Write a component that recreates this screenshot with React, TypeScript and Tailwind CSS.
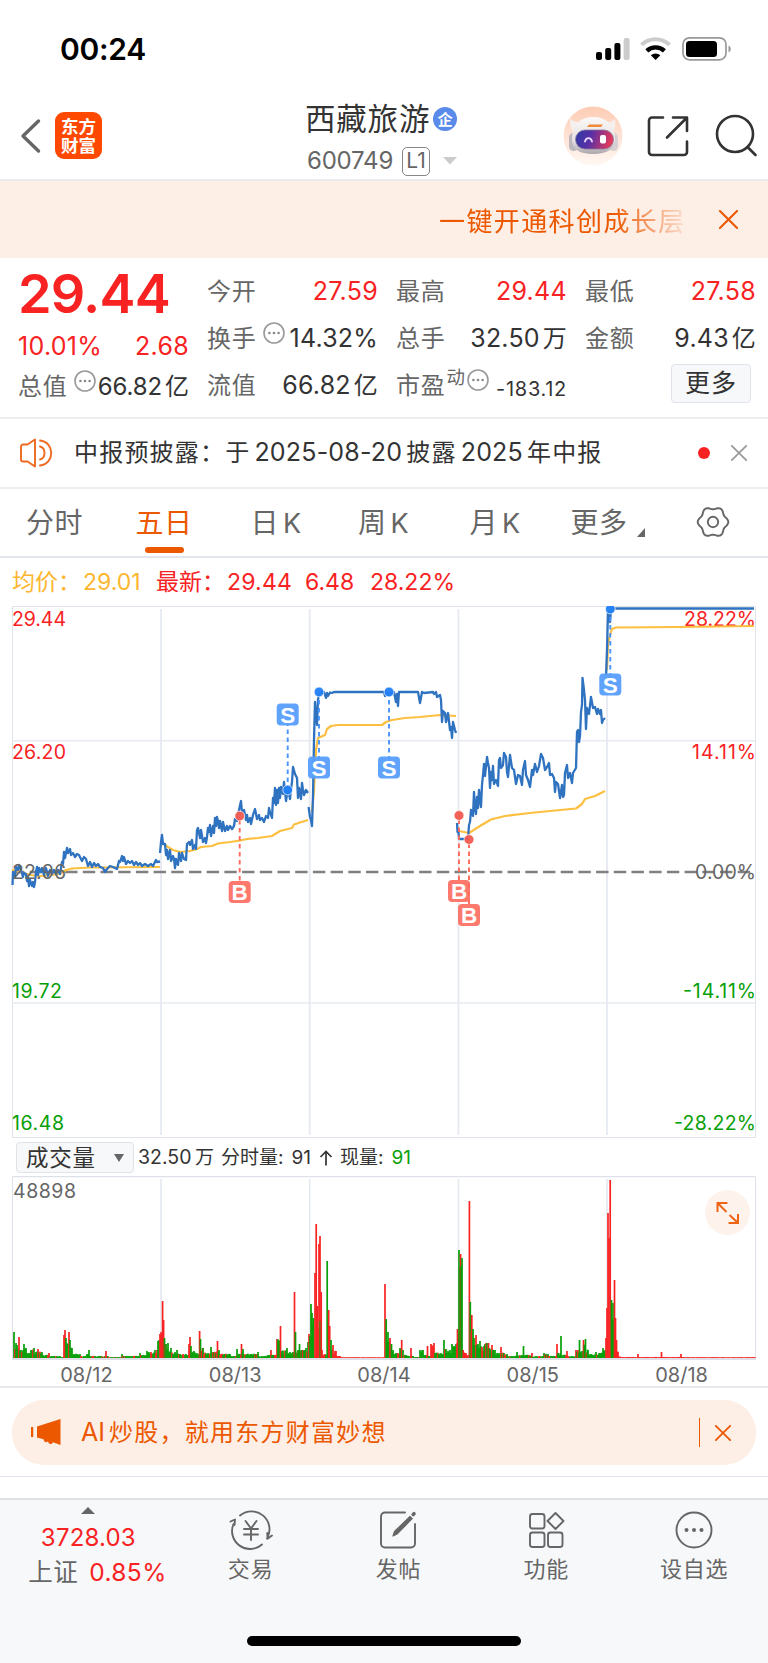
import type { ReactNode } from 'react'

type Point = [number, number]
type Bar = [number, number, string?]

const BLUE = '#2f73c0'
const YELLOW = '#fdbf3f'
const RED = '#f82222'
const GREEN = '#08a008'

const prices: Point[][] = [
  [[12.5, 885], [13, 872], [15, 876], [16, 867], [18, 870], [19, 865], [21, 870], [23, 877], [24, 873], [26, 874], [27, 881], [28, 877], [29, 886], [30, 880], [32, 886], [33, 882], [34, 887], [35, 882], [36, 872], [37, 867], [38, 875], [39, 868], [41, 872], [42, 868], [44, 875], [46, 868], [48, 876], [50, 870], [52, 874], [54, 870], [56, 874], [58, 870], [60, 874], [62, 862], [63, 864], [64, 852], [65, 858], [67, 848], [68, 853], [70, 849], [71, 855], [73, 853], [75, 857], [77, 854], [79, 855], [82, 861], [84, 857], [86, 859], [88, 866], [90, 862], [92, 867], [94, 863], [96, 866], [98, 864], [100, 867], [103, 868], [105, 872], [107, 869], [110, 866], [113, 867], [117, 869], [119, 861], [120, 862], [122, 856], [123, 861], [124, 857], [126, 864], [128, 861], [130, 863], [132, 861], [134, 865], [136, 862], [138, 865], [140, 863], [142, 866], [145, 864], [148, 866], [151, 864], [153, 866], [156, 860], [157, 862], [160, 861.5]],
  [[160, 853], [161, 842], [162, 835], [163, 844], [165, 844], [166, 855], [167, 850], [168, 859], [170, 850], [171, 861], [173, 856], [174, 859], [175, 868], [176, 859], [178, 865], [179, 853], [181, 861], [182, 853], [184, 859], [186, 860], [187, 844], [189, 842], [190, 845], [192, 840], [193, 849], [195, 845], [196, 849], [197, 830], [198, 828], [200, 838], [201, 830], [203, 842], [205, 838], [206, 843], [207, 837], [208, 828], [209, 832], [210, 825], [211, 836], [213, 826], [214, 833], [215, 818], [216, 826], [217, 817], [218, 821], [219, 828], [220, 821], [222, 831], [223, 822], [225, 831], [227, 826], [228, 830], [230, 826], [232, 829], [234, 826], [235, 819], [237, 821], [239, 810], [241, 801], [242, 813], [244, 810], [246, 820], [247, 815], [248, 822], [250, 818], [251, 824], [253, 815], [255, 809], [257, 819], [259, 815], [260, 820], [262, 818], [264, 822], [266, 816], [268, 818], [269, 808], [270, 812], [272, 818], [273, 798], [274, 803], [275, 788], [276, 805], [277, 790], [278, 803], [279, 788], [280, 798], [281, 787], [283, 794], [284, 782], [286, 801], [288, 788], [290, 799], [291, 789], [292, 782], [293, 767], [295, 774], [297, 778], [298, 798], [299, 788], [301, 799], [302, 783], [303, 790], [304, 795], [306, 790], [308, 793]],
  [[308.6, 807], [310, 817], [311, 820], [312, 826], [313, 796], [314, 740], [315, 702], [316, 715], [317, 725], [318, 700], [319, 693], [324, 692], [326, 698], [327, 693], [328, 696], [330, 692.5], [332, 693], [334, 692], [384, 692], [385, 696], [386, 692], [388, 695], [394, 692], [396, 702], [397, 694], [398, 706], [399, 692], [418, 692], [420, 703], [422, 692], [424, 693], [433, 692], [434, 694], [436, 692], [437, 697], [440, 695], [441, 700], [442, 722], [443, 711], [445, 713], [446, 722], [448, 713], [450, 730], [451, 727], [452, 738], [453, 722], [455, 730], [456, 733]],
  [[457, 823], [457.5, 832], [458.5, 832], [459, 839], [468, 839], [469, 825], [470, 822], [471, 810], [473, 816], [474, 792], [475, 808], [476, 814], [477, 797], [478, 808], [479, 790], [481, 807], [482, 785], [483, 775], [484, 764], [485, 776], [487, 757], [488, 763], [489, 768], [490, 788], [491, 772], [492, 780], [493, 766], [494, 784], [496, 780], [498, 786], [499, 760], [500, 758], [501, 768], [503, 765], [504, 753], [506, 757], [507, 772], [508, 777], [509, 766], [510, 755], [512, 768], [514, 770], [516, 784], [518, 775], [520, 776], [522, 785], [523, 770], [525, 761], [526, 775], [528, 780], [530, 787], [532, 770], [533, 775], [535, 764], [537, 772], [539, 766], [541, 754], [543, 758], [545, 770], [547, 767], [549, 763], [550, 775], [552, 774], [554, 778], [555, 792], [556, 782], [558, 784], [560, 798], [562, 785], [563, 797], [564, 795], [565, 773], [567, 765], [568, 778], [570, 773], [572, 783], [573, 773], [576, 768], [577, 732], [578, 730], [579, 742], [580, 736], [581, 712], [582, 705], [582.5, 678], [584, 690], [585, 700], [586, 729], [587, 708], [589, 714], [591, 697], [593, 708], [595, 707], [597, 714], [598, 709], [600, 714], [601, 710], [602, 723], [603, 720], [605, 718]],
  [[606, 676], [607, 650], [608, 612], [609, 613], [610, 622], [611, 610], [612, 608.5], [754, 608.5]],
]

const averages: Point[][] = [
  [[12, 870], [20, 872], [30, 875], [40, 876], [50, 875], [60, 874], [66, 870], [72, 868.5], [90, 867.5], [160, 867]],
  [[161, 841], [165, 845], [168, 847], [173, 850], [180, 852], [190, 851], [197, 849], [201, 847], [212, 846], [218, 843.5], [230, 842], [240, 840.5], [247, 839], [258, 838], [272, 836], [280, 831], [292, 828], [294, 824.5], [300, 822.5], [308, 820]],
  [[312, 812], [314, 790], [316, 750], [318, 738], [325, 735], [327, 729], [331, 726], [338, 725], [382, 725], [386, 722], [392, 720], [405, 718], [420, 717], [440, 715], [456, 716]],
  [[459, 831], [469, 833], [480, 826], [491, 819.5], [505, 816], [530, 813], [550, 811], [576, 808.5], [582, 804], [585, 799], [595, 796], [605, 791]],
  [[607, 670], [608, 645], [610, 635], [612, 629], [616, 627.5], [680, 627], [754, 626]],
]

// x, height, colour of each minute bar; the gaps are filled with small ones
const volumes: Bar[] = [
  [14, 26], [16, 15], [17, 13], [19, 21, 'r'], [21, 8], [24, 14], [26, 10], [29, 5], [31, 8], [34, 10], [36, 6], [38, 9, 'r'], [42, 6], [46, 3], [49, 5, 'r'], [52, 2], [60, 2], [63, 1], [64, 23, 'r'], [65, 28, 'r'], [66, 20], [68, 14], [69, 26, 'r'], [70, 18], [72, 10], [74, 4], [80, 4], [84, 2], [87, 4], [89, 8], [91, 2], [105, 2], [106, 7, 'r'], [108, 2], [118, 1], [122, 4], [126, 2], [138, 2], [140, 5], [143, 3], [147, 7], [151, 6, 'r'], [155, 8], [158, 17], [160, 24, 'r'], [162.6, 57, 'r'], [163.6, 38, 'r'], [164.5, 20], [166, 14], [168, 15], [171, 10], [175, 6], [177, 8], [180, 4], [186, 4], [189, 14, 'r'], [190, 21, 'r'], [191, 12], [194, 7], [197, 5], [199.6, 27, 'r'], [200.5, 19], [203, 10], [208, 5], [211, 11], [214, 6], [217.5, 17, 'r'], [219, 8], [224, 4], [230, 4], [235, 2], [237, 9], [240, 4], [241.5, 14, 'r'], [243, 9], [247, 4], [256, 4], [258, 6], [262, 2], [268, 3], [271, 8, 'r'], [274, 3], [277, 19, 'r'], [278.5, 18], [280.5, 32, 'r'], [282, 7], [287, 10], [290, 6], [293, 6], [294.5, 66, 'r'], [295.5, 26], [298, 8], [299.5, 14], [302, 8], [306, 10], [308, 16], [309, 24, 'r'], [311, 54], [312, 45], [313.6, 40], [315, 85, 'r'], [316.2, 134, 'r'], [317.2, 52, 'r'], [318, 30, 'r'], [319, 114, 'r'], [320, 122, 'r'], [320.3, 37], [321.2, 66, 'r'], [322, 8, 'r'], [325, 4, 'r'], [327.2, 97], [328.7, 48, 'r'], [329.7, 32, 'r'], [331, 18], [333, 13, 'r'], [336, 7, 'r'], [340, 2, 'r'], [343, 0.7, 'r'], [384, 0.7, 'r'], [385, 74, 'r'], [386.2, 39], [388, 26], [390, 20, 'r'], [391.5, 14], [393, 8], [396, 5], [400, 10], [401.7, 18, 'r'], [403, 8], [406, 3], [409, 2], [411, 10, 'r'], [413, 2], [418, 1], [420, 8], [423, 8], [425, 3], [427.5, 12, 'r'], [429, 2], [431, 14, 'r'], [434, 15, 'r'], [436, 5], [441, 5], [444, 18], [446, 9], [450, 8], [452, 14], [456, 14], [457.5, 29, 'r'], [459, 108], [460, 90], [460.6, 104, 'r'], [461.2, 92], [462, 100], [463.2, 8, 'r'], [466, 5, 'r'], [468, 3, 'r'], [469.4, 157, 'r'], [470.3, 56], [471.8, 43, 'r'], [473, 29], [474, 20], [476, 23, 'r'], [478, 14], [480, 17], [484, 12], [485, 14], [488.5, 15, 'r'], [490, 9], [492, 13, 'r'], [495, 8], [497, 5], [501, 11, 'r'], [504, 5], [507, 4], [512, 2], [517, 6], [522, 3], [523.5, 12], [526, 3], [532, 5, 'r'], [536, 2], [544, 5], [548, 4], [552, 2], [557, 14, 'r'], [558.5, 5], [561, 22], [563, 3], [567, 7, 'r'], [572, 2], [576, 8, 'r'], [579.5, 18], [582, 7], [583.5, 18, 'r'], [585.5, 19], [588, 8], [591, 4], [596, 6], [600, 5], [603, 10], [606, 20, 'r'], [607, 50, 'r'], [608, 145, 'r'], [609, 120, 'r'], [610.2, 178, 'r'], [611.5, 58], [613, 55], [614.5, 78, 'r'], [615.5, 40, 'r'], [616.5, 18, 'r'], [618, 6, 'r'], [620, 1.5, 'r'], [630, 1, 'r'], [638, 4, 'r'], [640, 1, 'r'], [660, 1, 'r'], [661.5, 6, 'r'], [663, 1, 'r'], [680, 1, 'r'], [681, 4, 'r'], [683, 1, 'r'], [755, 0.8, 'r'],
]

function fillBars(data: Bar[]): Bar[] {
  let seed = 7
  const rand = () => {
    seed = (seed * 16807) % 2147483647
    return seed / 2147483647
  }
  const out: Bar[] = []
  data.forEach((bar, i) => {
    out.push(bar)
    const next = data[i + 1]
    if (!next) return
    for (let x = bar[0] + 1; x < next[0] - 0.4; x += 1) {
      const h = Math.min(bar[1], next[1]) * (0.6 + rand() * 0.5)
      const red = rand() > 0.72 || (bar[2] === 'r' && next[2] === 'r')
      out.push([x, h, red ? 'r' : undefined])
    }
  })
  return out
}

const bars = fillBars(volumes)

const markers = [
  { type: 'S', x: 287.7, dot: 790, y: 714.5 },
  { type: 'S', x: 319, dot: 692, y: 767.5 },
  { type: 'S', x: 389, dot: 692, y: 767.5 },
  { type: 'S', x: 610.3, dot: 609, y: 684.5 },
  { type: 'B', x: 239.7, dot: 816, y: 892 },
  { type: 'B', x: 459, dot: 815.5, y: 891 },
  { type: 'B', x: 469, dot: 839.5, y: 915 },
]

const toPoints = (list: Point[]) => list.map((p) => p.join(',')).join(' ')

// six soft lobes around a circle
const gear = Array.from({ length: 90 }, (_, i) => {
  const a = (i / 90) * Math.PI * 2
  const r = 14 + 1.3 * Math.cos(6 * a)
  return `${(17 + r * Math.cos(a)).toFixed(2)},${(16 + r * Math.sin(a)).toFixed(2)}`
}).join(' ')

function MoreDots({ className }: { className?: string }) {
  return (
    <svg className={`size-[22px] shrink-0 ${className ?? ''}`} viewBox="0 0 22 22" fill="none">
      <circle cx="11" cy="11" r="10" stroke="#999" strokeWidth="1.6" />
      <circle cx="6.4" cy="11" r="1.3" fill="#888" />
      <circle cx="11" cy="11" r="1.3" fill="#888" />
      <circle cx="15.6" cy="11" r="1.3" fill="#888" />
    </svg>
  )
}

function Cross({ className }: { className?: string }) {
  return (
    <svg className={className} viewBox="0 0 20 20" fill="none" stroke="currentColor" strokeWidth="2.2" strokeLinecap="round">
      <path d="M1 1 19 19M19 1 1 19" />
    </svg>
  )
}

function StatusBar() {
  return (
    <div className="flex h-[90px] items-start justify-between pr-[36px] pl-[60px]">
      <span className="mt-[29px] text-[30px] leading-10 font-semibold tracking-[-0.3px] text-black">00:24</span>
      <div className="mt-[36px] flex items-center">
        <svg width="36" height="26" viewBox="0 0 36 26">
          <rect x="0" y="16" width="6" height="8" rx="2" />
          <rect x="9.2" y="12" width="6" height="12" rx="2" />
          <rect x="18.400" y="7" width="6" height="17" rx="2" />
          <rect x="27.600" y="2" width="6" height="22" rx="2" fill="#ccc" />
        </svg>
        <svg className="ml-[7px]" width="34" height="26" viewBox="0 0 34 26" fill="none">
          <path d="M2.5 8.8a20.5 20.5 0 0 1 28 0" stroke="#ccc" strokeWidth="4.2" />
          <path d="M7.8 14.8a13 13 0 0 1 17.6 0" stroke="#000" strokeWidth="4.4" />
          <path d="M16.6 24l-4.8-4.8a7.4 7.4 0 0 1 9.6 0z" fill="#000" />
        </svg>
        <svg className="ml-[9px]" width="50" height="26" viewBox="0 0 50 26">
          <rect x="1" y="1.8" width="43" height="22" rx="6.5" fill="none" stroke="#999" strokeWidth="1.7" />
          <rect x="4" y="5" width="31" height="16" rx="3.5" />
          <path d="M46.5 9.5v7c3-1.500 3-5.500 0-7z" fill="#999" />
        </svg>
      </div>
    </div>
  )
}

function Robot() {
  return (
    <svg width="60" height="60" viewBox="0 0 60 60">
      <defs>
        <linearGradient id="halo" x1="0" y1="0" x2="0" y2="1">
          <stop offset="0" stopColor="#fdccb4" />
          <stop offset="1" stopColor="#fff8f4" />
        </linearGradient>
        <linearGradient id="visor" x1="0" y1="0" x2="1" y2="0.15">
          <stop offset="0" stopColor="#2c3ba4" />
          <stop offset="0.45" stopColor="#5b2fa6" />
          <stop offset="1" stopColor="#e23a5c" />
        </linearGradient>
        <linearGradient id="shell" x1="0" y1="0" x2="0" y2="1">
          <stop offset="0" stopColor="#fbf8f7" />
          <stop offset="0.65" stopColor="#e6e1e3" />
          <stop offset="1" stopColor="#a9a5ab" />
        </linearGradient>
      </defs>
      <circle cx="30" cy="30" r="29.500" fill="url(#halo)" />
      <path d="M7 12c0 8 1 12 5 16l9-12c-6 1-11 0-14-4zM52 13c1 8 0 11-4 15l-8-12c5 1 9 0 12-3z" fill="#f5efed" />
      <rect x="6" y="27" width="9" height="18" rx="4.500" fill="#bdb8be" />
      <rect x="46" y="27" width="9" height="18" rx="4.500" fill="#d6d0d3" />
      <path d="M9 33c0-14 8-22 21-22s22 8 22 22c0 10-8 15-22 15S9 43 9 33z" fill="url(#shell)" />
      <rect x="12.500" y="24" width="38" height="19" rx="9.500" fill="url(#visor)" stroke="#8d7a9a" strokeWidth="0.800" />
      <path d="M22 35.500c1-4.500 6-4.500 7 0" fill="none" stroke="#e9d9ff" strokeWidth="1.800" strokeLinecap="round" />
      <rect x="37" y="29" width="6" height="8.500" rx="2" fill="#fff" />
      <path d="M24 21l2-2.500h14l-2 2.500z" fill="#ee8a3c" />
    </svg>
  )
}

function Header() {
  return (
    <header className="flex h-[91px] items-start border-b-2 border-[#ebecef] pl-[20px]">
      <svg className="mt-[28px]" width="22" height="36" viewBox="0 0 22 36" fill="none" stroke="#666" strokeWidth="3.4" strokeLinecap="round" strokeLinejoin="round">
        <path d="M18.500 3 3 18l15.500 15" />
      </svg>
      <div className="mt-[22px] ml-[13px] flex h-[47px] w-[47px] flex-col items-center justify-center rounded-[9px] bg-[#ff4800] text-[17.500px] leading-[19px] font-bold text-white">
        <span>东方</span>
        <span>财富</span>
      </div>
      <div className="ml-[203px] flex w-[258px] flex-col">
        <div className="flex h-[58px] items-center">
          <span className="text-[30.500px] tracking-[0.800px] text-[#333]">西藏旅游</span>
          <span className="ml-[3px] flex size-[24px] items-center justify-center rounded-full bg-[#5a8bea] text-[15px] leading-none font-bold text-white">企</span>
        </div>
        <div className="-mt-[2px] flex h-[30px] items-center text-[#666]">
          <span className="ml-[2px] text-[24px] tracking-[-0.2px]">600749</span>
          <span className="ml-[9px] flex h-[29px] w-[28px] items-center justify-center rounded-[5px] border border-[#888] text-[21px]">L1</span>
          <svg className="ml-[13px]" width="14" height="8" viewBox="0 0 14 8">
            <path d="M0 0h14L7 7.500z" fill="#ccc" />
          </svg>
        </div>
      </div>
      <div className="mt-[16px]">
        <Robot />
      </div>
      <svg className="mt-[25px] ml-[24px]" width="42" height="42" viewBox="0 0 42 42" fill="none" stroke="#333" strokeWidth="2.6" strokeLinecap="round" strokeLinejoin="round">
        <path d="M16 2.500H5a3 3 0 0 0-3 3V37a3 3 0 0 0 3 3h32a3 3 0 0 0 3-3V26.500" />
        <path d="M26 2.500h14V16M39.500 3 20 22.500" />
      </svg>
      <svg className="mt-[24px] ml-[26px]" width="43" height="43" viewBox="0 0 43 43" fill="none" stroke="#333" strokeWidth="2.6" strokeLinecap="round">
        <circle cx="20" cy="20" r="18" />
        <path d="m32.500 33 8 8" />
      </svg>
    </header>
  )
}

function Banner() {
  return (
    <div className="flex h-[77px] items-center justify-end bg-[#fdeee6] pr-[30px] text-[#ec5800]">
      <span className="mt-[4px] w-[249px] overflow-hidden text-[26px] leading-[40px] tracking-[1.400px] whitespace-nowrap [mask-image:linear-gradient(to_right,black_70%,transparent_102%)]">
        一键开通科创成长层
      </span>
      <Cross className="ml-[31px] size-[19px]" />
    </div>
  )
}

function Cell({ label, children, red }: { label: ReactNode; children?: ReactNode; red?: boolean }) {
  return (
    <div className="flex h-[47px] items-center justify-between whitespace-nowrap">
      <span className="flex items-center text-[24px] tracking-[0.8px] text-[#666]">{label}</span>
      <span className={red ? '-mr-px text-[25px] tracking-[0.3px] text-[#f82222]' : '-mr-px text-[25px] tracking-[0.2px] text-[#333]'}>{children}</span>
    </div>
  )
}

function Unit({ children }: { children: ReactNode }) {
  return <span className="ml-[3px] text-[24px]">{children}</span>
}

function Quote() {
  return (
    <section className="grid h-[161px] grid-cols-4 gap-x-[19px] border-b-2 border-[#eeeeef] pt-[10px] pr-[13px] pl-[18px]">
      <div className="text-[#f82222]">
        <div className="flex h-[55px] items-center pb-[4px] text-[54px] font-semibold tracking-[-0.8px]">29.44</div>
        <div className="-mr-px flex h-[44px] items-center justify-between pt-[3px] text-[25px] tracking-[0.3px]">
          <span>10.01%</span>
          <span>2.68</span>
        </div>
        <div className="-mr-px flex h-[39px] items-center whitespace-nowrap text-[#333]">
          <span className="text-[24px] tracking-[0.8px] text-[#666]">总值</span>
          <MoreDots className="-mt-[12px] ml-[6px]" />
          <span className="ml-auto text-[24px] tracking-[-0.1px]">66.82<Unit>亿</Unit></span>
        </div>
      </div>
      <div>
        <Cell label="今开" red>27.59</Cell>
        <Cell label={<>换手<MoreDots className="-mt-[12px] ml-[6px]" /></>}>14.32%</Cell>
        <Cell label="流值">66.82<Unit>亿</Unit></Cell>
      </div>
      <div>
        <Cell label="最高" red>29.44</Cell>
        <Cell label="总手">32.50<Unit>万</Unit></Cell>
        <Cell
          label={
            <>
              市盈
              <span className="-mt-[16px] ml-px text-[18.500px]">动</span>
              <MoreDots className="-mt-[12px] ml-px" />
            </>
          }
        >
          <span className="relative top-[2px] text-[20px] tracking-[0.7px]">-183.12</span>
        </Cell>
      </div>
      <div>
        <Cell label="最低" red>27.58</Cell>
        <Cell label="金额">9.43<Unit>亿</Unit></Cell>
        <button className="mt-[2px] mr-[4px] ml-auto flex h-[39px] w-[80px] items-center justify-center rounded-[4px] border border-[#dfe2e8] bg-[#f7f8fa] text-[25px] tracking-[1px] text-[#333]">
          更多
        </button>
      </div>
    </section>
  )
}

function Notice() {
  return (
    <div className="flex h-[70px] items-center border-b-2 border-[#eeeeef] pr-[21px] pl-[20px]">
      <svg width="33" height="30" viewBox="0 0 33 30" fill="none" stroke="#ee6a20" strokeWidth="1.9" strokeLinejoin="round" strokeLinecap="round">
        <path d="M15 1.500 7.500 6.500H3a2 2 0 0 0-2 2v13a2 2 0 0 0 2 2h4.500L15 28.500z" />
        <path d="M20 8.500c6 1.500 6 11.500 0 13M20 2.500c15 1.500 15 23.500 0 25" />
      </svg>
      <div className="ml-[21px] flex items-center text-[24px] tracking-[1.200px] whitespace-nowrap text-[#333]">
        <span>中报预披露：于</span>
        <span className="ml-[4px] text-[25px] tracking-[0.2px]">2025-08-20</span>
        <span className="ml-[4px]">披露</span>
        <span className="ml-[4px] text-[25px] tracking-[0.2px]">2025</span>
        <span className="ml-[4px]">年中报</span>
      </div>
      <span className="ml-auto size-[12px] rounded-full bg-[#f82222]" />
      <Cross className="ml-[21px] size-[16px] text-[#999]" />
    </div>
  )
}

function Tabs() {
  return (
    <nav className="flex h-[69px] items-center border-b-2 border-[#e3e5ee] pt-px text-[28px] tracking-[0.500px] text-[#666]">
      <span className="w-[109px] text-center">分时</span>
      <span className="relative w-[110px] text-center text-[#ec5800]">
        五日
        <i className="absolute -bottom-[9px] left-[36px] h-[6px] w-[39px] rounded-full bg-[#ec5800]" />
      </span>
      <span className="w-[114px] text-center">日<span className="ml-[4px] text-[27px]">K</span></span>
      <span className="w-[101px] text-center">周<span className="ml-[4px] text-[27px]">K</span></span>
      <span className="w-[122px] text-center">月<span className="ml-[4px] text-[27px]">K</span></span>
      <span className="flex w-[103px] items-center justify-center">
        更多
        <svg className="mt-[19px] ml-[9px]" width="8" height="9" viewBox="0 0 8 9">
          <path d="M8 0v9H0z" fill="#666" />
        </svg>
      </span>
      <span className="flex w-[108px] justify-center pb-[2px]">
        <svg width="34" height="32" viewBox="0 0 34 32" fill="none" stroke="#666" strokeWidth="1.900" strokeLinejoin="round">
          <polygon points={gear} />
          <circle cx="17" cy="16" r="5.200" />
        </svg>
      </span>
    </nav>
  )
}

function Label({ x, y, w, fill, end, children }: { x: number; y: number; w: number; fill: string; end?: boolean; children: string }) {
  return (
    <text x={x} y={y} fontSize="19.500" fill={fill} textAnchor={end ? 'end' : 'start'} textLength={w}>
      {children}
    </text>
  )
}

function PriceChart() {
  return (
    <svg className="block" width="768" height="532" viewBox="0 606 768 532">
      <path d="M12.500 1137.500V606.500H755.500V1137.500Z" fill="none" stroke="#dfe3ea" />
      <path d="M12 740.700H755M12 1003H755" stroke="#e8ebf1" strokeWidth="1.500" />
      <path d="M161 609V1135M309.700 609V1135M458.500 609V1135M607 609V1135" stroke="#e6e9f1" strokeWidth="1.800" />
      <path d="M12 872H755" stroke="#808080" strokeWidth="2.300" strokeDasharray="12.400 5.300" />
      <Label x={12} y={626} w={54} fill={RED}>29.44</Label>
      <Label x={12} y={758.500} w={54} fill={RED}>26.20</Label>
      <Label x={12} y={998} w={50} fill={GREEN}>19.72</Label>
      <Label x={12} y={1130} w={52} fill={GREEN}>16.48</Label>
      <Label x={756} y={626} w={72} fill={RED} end>28.22%</Label>
      <Label x={756} y={758.500} w={64} fill={RED} end>14.11%</Label>
      <Label x={756} y={878.500} w={61} fill="#666" end>0.00%</Label>
      <Label x={756} y={998} w={73} fill={GREEN} end>-14.11%</Label>
      <Label x={756} y={1130} w={82} fill={GREEN} end>-28.22%</Label>
      {averages.map((line, i) => (
        <polyline key={i} points={toPoints(line)} fill="none" stroke={YELLOW} strokeWidth="2.200" strokeLinejoin="round" />
      ))}
      {prices.map((line, i) => (
        <polyline key={i} points={toPoints(line)} fill="none" stroke={BLUE} strokeWidth="2.300" strokeLinejoin="round" />
      ))}
      <Label x={12} y={878.500} w={54} fill="#666">22.96</Label>
      {markers.map((m) => {
        const buy = m.type === 'B'
        const color = buy ? '#fd6a5b' : '#4a94fc'
        return (
          <g key={`${m.x}-${m.y}`}>
            <path d={`M${m.x} ${m.dot + (buy ? 4 : 0)}V${m.y}`} stroke={color} strokeWidth="1.900" strokeDasharray="4.500 3.500" />
            <circle cx={m.x} cy={m.dot} r="4.900" fill={buy ? '#f25a50' : '#2180f7'} fillOpacity="0.95" stroke="#fff" strokeWidth="0.700" />
            <rect x={m.x - 11} y={m.y - 11} width="22" height="22" rx="4" fill={buy ? '#fd7468' : '#5a9ffd'} fillOpacity="0.96" />
            <text x={m.x} y={m.y + 8} textAnchor="middle" fontSize="22.500" fontWeight="700" fill="#fff" fontFamily="Liberation Sans">
              {m.type}
            </text>
          </g>
        )
      })}
    </svg>
  )
}

function VolumeToolbar() {
  return (
    <div className="flex h-[38px] items-center pl-[16px] whitespace-nowrap text-[#333]">
      <div className="flex h-[31px] w-[118px] items-center rounded-[4px] border border-[#dfe2e8] bg-[#f7f8fa] pt-px pl-[9px] text-[22.500px] tracking-[0.800px]">
        成交量
        <svg className="ml-[18px]" width="10" height="8" viewBox="0 0 10 8">
          <path d="M0 0h10L5 8z" fill="#666" />
        </svg>
      </div>
      <div className="flex items-center pt-[2px] text-[19px]">
        <span className="ml-[4px] w-[54px] text-[19.500px]">32.50</span>
        <span className="ml-[3px]">万</span>
        <span className="ml-[7px]">分时量:</span>
        <span className="ml-[8px]">91</span>
        <svg className="ml-[8px]" width="14" height="16" viewBox="0 0 14 16" fill="none" stroke="#333" strokeWidth="1.700">
          <path d="M7 15.500V1.500M1.500 7 7 1.500 12.500 7" />
        </svg>
        <span className="ml-[7px]">现量:</span>
        <span className="ml-[8px] text-[#08a008]">91</span>
      </div>
    </div>
  )
}

function VolumeChart() {
  return (
    <div className="relative">
      <svg className="block" width="768" height="184" viewBox="0 1176 768 184">
        <path d="M12 1176.200H756" stroke="#dfe1ea" strokeWidth="2" />
        <path d="M12.500 1176V1360M755.500 1176V1360" stroke="#dfe1ea" />
        <path d="M161 1179V1357M309.700 1179V1357M458.500 1179V1357M607 1179V1357" stroke="#e4e9f1" strokeWidth="1.600" />
        {bars.map(([x, h, c], i) => (
          <rect key={i} x={x - 0.85} y={1358 - h} width="1.700" height={h} fill={c ? RED : GREEN} />
        ))}
        <path d="M12 1359H756" stroke="#dfdfe8" strokeWidth="1.800" />
        <Label x={13} y={1198} w={63} fill="#666">48898</Label>
      </svg>
      <button className="absolute top-[14px] right-[18px] flex size-[45px] items-center justify-center rounded-full bg-[#fdf2ec]">
        <svg width="24" height="24" viewBox="0 0 24 24" fill="none" stroke="#ee6518" strokeWidth="2">
          <path d="M1.500 11V2h10M2 2.500l8.500 8.500M22 13v9H12.500M21.500 21.500 13.500 14" />
        </svg>
      </button>
    </div>
  )
}

function Promo() {
  return (
    <div className="mx-[12px] mt-[12px] flex h-[65px] items-center rounded-[32px] bg-[#fdeee6] pr-[25px] pl-[19px] text-[#ec5800]">
      <svg width="30" height="27" viewBox="0 0 30 27" fill="currentColor">
        <path d="M0 8h2.200v10H0zM6 7.500 29.500 0v26L22 23.300c-1 2.500-3.500 2-4.500.5l-.5-1.500c-1 1.500-3.500 1-4-.5l-.5-1.500L6 18.500z" />
      </svg>
      <span className="ml-[20px] text-[25px]">AI</span>
      <span className="ml-[4px] text-[24px] tracking-[1.250px]">炒股，就用东方财富妙想</span>
      <span className="ml-auto h-[29px] w-[1.500px] bg-[#ec5800]" />
      <Cross className="ml-[15px] size-[16px]" />
    </div>
  )
}

function NavItem({ label, children }: { label: string; children: ReactNode }) {
  return (
    <div className="flex w-[148px] flex-col items-center">
      <svg className="mt-[9px]" width="44" height="42" viewBox="0 0 44 42" fill="none" stroke="#666" strokeWidth="1.900" strokeLinecap="round" strokeLinejoin="round">
        {children}
      </svg>
      <span className="mt-px text-[22px] leading-[34px] tracking-[0.800px] text-[#666]">{label}</span>
    </div>
  )
}

function BottomBar() {
  return (
    <footer className="flex h-[165px] flex-col border-t-2 border-[#dfe1e4] bg-[#f7f8fa]">
      <div className="flex h-[136px]">
        <div className="flex w-[177px] flex-col items-center text-[24px] text-[#f82222]">
          <svg className="mt-[7px]" width="14" height="7" viewBox="0 0 14 7">
            <path d="M7 0l7 7H0z" fill="#666" />
          </svg>
          <span className="mt-[6px] leading-[36px] tracking-[0.200px]">3728.03</span>
          <span className="-mt-px flex items-center pl-[18px] leading-[34px]">
            <span className="text-[24.500px] tracking-[0.500px] text-[#666]">上证</span>
            <span className="ml-[11px] text-[24.500px] tracking-[0.400px]">0.85%</span>
          </span>
        </div>
        <NavItem label="交易">
          <path d="M11 6.500A18 18 0 0 1 38 29.500M4.500 15A18 18 0 0 0 33 35.500M1.500 12.500 6 10.500 5.500 16M43 26.500 38.500 29.800 38.300 24" />
          <path d="m16.500 12 5.500 7.500 5.500-7.500M22 19.500V31M15 20h14M15 25.500h14" />
        </NavItem>
        <NavItem label="发帖">
          <path d="M29 3.500H9a4 4 0 0 0-4 4v27a4 4 0 0 0 4 4h26a4 4 0 0 0 4-4V15" />
          <path d="M17 27 18.500 22.500 34 7.500 36.200 9.700 21 25z" fill="#666" strokeWidth="1.200" />
          <path d="m37.200 5.500.8-.8" strokeWidth="3.600" />
        </NavItem>
        <NavItem label="功能">
          <rect x="6" y="5" width="14.500" height="14.500" rx="2.500" />
          <rect x="6" y="23.500" width="14.500" height="14.500" rx="2.500" />
          <rect x="24" y="23.500" width="14.500" height="14.500" rx="2.500" />
          <path d="M31.500 4 39.500 12 31.500 20 23.500 12z" />
        </NavItem>
        <NavItem label="设自选">
          <circle cx="22" cy="21" r="17.500" />
          <g fill="#666" stroke="none">
            <circle cx="14.500" cy="21" r="2" />
            <circle cx="22" cy="21" r="2" />
            <circle cx="29.500" cy="21" r="2" />
          </g>
        </NavItem>
      </div>
      <div className="mx-auto h-[10px] w-[274px] rounded-full bg-black" />
    </footer>
  )
}

export default function App() {
  return (
    <main className="h-[1663px] w-[768px] overflow-hidden bg-white font-[Inter,'Noto_Sans_CJK_SC',sans-serif]">
      <StatusBar />
      <Header />
      <Banner />
      <Quote />
      <Notice />
      <Tabs />
      <div className="flex h-[48px] items-center pt-px pl-[12px] text-[23px] whitespace-nowrap text-[#f82222]">
        <span className="w-[71px] text-[#fdb62f]">均价：</span>
        <span className="w-[73px] text-[#fdb62f]">29.01</span>
        <span className="w-[71px]">最新：</span>
        <span className="w-[78px] tracking-[0.2px]">29.44</span>
        <span className="w-[65px]">6.48</span>
        <span>28.22%</span>
      </div>
      <PriceChart />
      <VolumeToolbar />
      <VolumeChart />
      <div className="grid h-[28px] grid-cols-5 items-center border-b-2 border-[#eaeaee] px-[12px] text-center text-[20px] text-[#666]">
        <span>08/12</span>
        <span>08/13</span>
        <span>08/14</span>
        <span>08/15</span>
        <span>08/18</span>
      </div>
      <Promo />
      <div className="mt-[11px] h-[22px] border-t border-[#e3e5ee]" />
      <BottomBar />
    </main>
  )
}
